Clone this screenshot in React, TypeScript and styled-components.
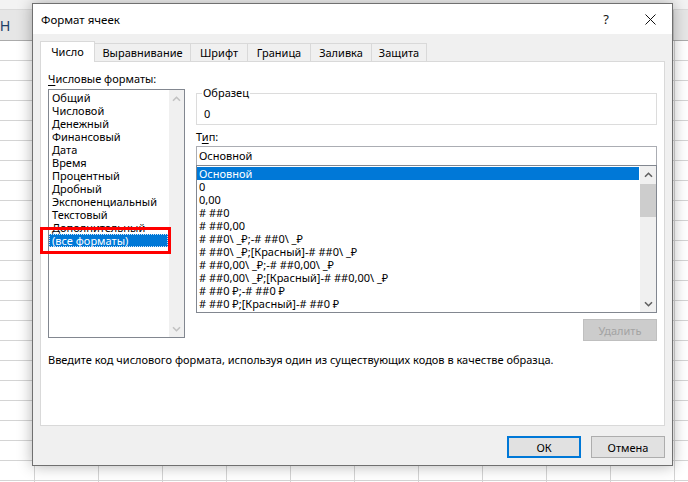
import React from "react";
import styled, { createGlobalStyle, css } from "styled-components";

const GlobalStyle = createGlobalStyle`
  html, body {
    margin: 0;
    padding: 0;
    background: #fff;
  }
  body {
    font-family: "Noto Sans", "Open Sans", sans-serif;
    font-size: 11px;
    color: #000;
  }
`;

// spreadsheet behind the dialog
const Sheet = styled.div`
  position: relative;
  width: 688px;
  height: 482px;
  overflow: hidden;
  background: #fff;
  display: flex;
  flex-direction: column;
`;

const FormulaStrip = styled.div`
  height: 10px;
  background: #f3f3f3;
  border-bottom: 1px solid #dadada;
  box-sizing: border-box;
`;

const ColumnHeader = styled.div`
  height: 31px;
  box-sizing: border-box;
  background: #e6e6e6;
  border-bottom: 1px solid #ababab;
  display: flex;
`;

const HeaderCell = styled.div<{ $w: number; $active?: boolean }>`
  flex: 0 0 ${({ $w }) => $w}px;
  box-sizing: border-box;
  border-right: 1px solid #c8c8c8;
  display: flex;
  align-items: center;
  padding-top: 2px;
  font-family: "Liberation Sans", Arial, sans-serif;
  font-size: 14px;
  color: ${({ $active }) => ($active ? "#1e3f66" : "#444")};
`;

const Cells = styled.div`
  flex: 1;
  background-image: linear-gradient(to right, #d4d4d4 1px, transparent 1px),
    linear-gradient(to bottom, transparent 19px, #d4d4d4 19px);
  background-size: 64px 100%, 100% 20px;
  background-position: 34px 0, 0 0;
`;

// dialog window
const Dialog = styled.div`
  position: absolute;
  left: 32px;
  top: 3px;
  width: 641px;
  height: 463px;
  box-sizing: border-box;
  border: 1px solid #707070;
  background: #f0f0f0;
  box-shadow: 0 0 14px rgba(0, 0, 0, 0.3);
  display: flex;
  flex-direction: column;
`;

const TitleBar = styled.div`
  height: 30px;
  flex: 0 0 30px;
  background: #fff;
  display: flex;
  align-items: center;
  padding-left: 8px;
`;

const Title = styled.div`
  flex: 1;
  font-size: 11.5px;
`;

const TitleButton = styled.div`
  width: 44px;
  height: 30px;
  display: flex;
  align-items: center;
  justify-content: center;
  font-size: 13px;
  color: #111;
`;

const Body = styled.div`
  flex: 1;
  display: flex;
  flex-direction: column;
  padding: 7px 7px 0 7px;
`;

const TabRow = styled.div`
  height: 20px;
  display: flex;
  align-items: flex-end;
`;

const Tab = styled.div<{ $w: number; $active?: boolean }>`
  width: ${({ $w }) => $w}px;
  box-sizing: border-box;
  border: 1px solid #d9d9d9;
  border-bottom: none;
  margin-right: -1px;
  display: flex;
  align-items: center;
  justify-content: center;
  ${({ $active }) =>
    $active
      ? css`
          height: 21px;
          margin-bottom: -1px;
          background: #fff;
          position: relative;
          z-index: 1;
          padding-bottom: 1px;
        `
      : css`
          height: 18px;
          background: #f0f0f0;
        `}
`;

const Panel = styled.div`
  height: 365px;
  box-sizing: border-box;
  background: #fff;
  border: 1px solid #d9d9d9;
  padding: 7px 7px 0 7px;
  display: flex;
  flex-direction: column;
`;

const Columns = styled.div`
  display: flex;
  gap: 11px;
`;

const LeftColumn = styled.div`
  width: 137px;
  display: flex;
  flex-direction: column;
`;

const RightColumn = styled.div`
  width: 461px;
  display: flex;
  flex-direction: column;
`;

const FieldLabel = styled.div<{ $h: number; $top?: number }>`
  line-height: ${({ $h }) => $h}px;
  height: ${({ $h }) => $h}px;
  margin-top: ${({ $top }) => $top ?? 0}px;
  white-space: nowrap;

  u {
    text-decoration: underline;
    text-underline-offset: 2px;
  }
`;

const ListBox = styled.div<{ $h: number }>`
  position: relative;
  height: ${({ $h }) => $h}px;
  box-sizing: border-box;
  border: 1px solid #828790;
  background: #fff;
  display: flex;
`;

const Items = styled.div<{ $pad: number }>`
  flex: 1;
  padding: 1px 1px 0 0;
  overflow: hidden;

  > div {
    padding-left: ${({ $pad }) => $pad}px;
  }
`;

const Item = styled.div<{ $selected?: boolean; $focus?: boolean }>`
  height: 13px;
  line-height: 13px;
  white-space: nowrap;
  box-sizing: border-box;
  ${({ $selected }) =>
    $selected &&
    css`
      background: #0078d7;
      color: #fff;
    `}
  ${({ $focus }) =>
    $focus &&
    css`
      outline: 1px dotted #cfe3f6;
      outline-offset: -1px;
    `}
`;

const ScrollBar = styled.div<{ $w: number }>`
  flex: 0 0 ${({ $w }) => $w}px;
  background: #f0f0f0;
  display: flex;
  flex-direction: column;
`;

const ScrollArrow = styled.div<{ $disabled?: boolean }>`
  height: 17px;
  display: flex;
  align-items: center;
  justify-content: center;
  color: ${({ $disabled }) => ($disabled ? "#c2c2c2" : "#606060")};
`;

const ScrollTrack = styled.div`
  flex: 1;
  padding-top: 1px;
`;

const Thumb = styled.div`
  height: 33px;
  background: #cdcdcd;
`;

const Highlight = styled.div`
  position: absolute;
  left: -9px;
  top: 137px;
  width: 131px;
  height: 27px;
  box-sizing: border-box;
  border: 3px solid #f00;
  pointer-events: none;
`;

const GroupBox = styled.div`
  margin-top: 24px;
  border: 1px solid #dcdcdc;
  padding-bottom: 2px;
`;

const GroupLegend = styled.div`
  margin: -9px 0 0 5px;
  padding: 0 1px;
  width: fit-content;
  background: #fff;
  line-height: 16px;
`;

const GroupValue = styled.div`
  margin-top: 5px;
  padding-left: 7px;
  line-height: 16px;
`;

const TypeInput = styled.div`
  margin-top: 1px;
  height: 19px;
  box-sizing: border-box;
  border: 1px solid #abadb3;
  border-bottom: none;
  padding-left: 2px;
  line-height: 18px;
`;

const Button = styled.div<{ $variant?: "default" | "disabled" | "normal" }>`
  width: 74px;
  height: 22px;
  box-sizing: border-box;
  display: flex;
  align-items: center;
  justify-content: center;
  background: #e1e1e1;
  border: 1px solid #adadad;
  ${({ $variant }) =>
    $variant === "default" &&
    css`
      border: 2px solid #0078d7;
    `}
  ${({ $variant }) =>
    $variant === "disabled" &&
    css`
      background: #cccccc;
      border-color: #bfbfbf;
      color: #a3a3a3;
    `}
`;

const DeleteRow = styled.div`
  margin-top: 6px;
  display: flex;
  justify-content: flex-end;
`;

const Hint = styled.div`
  margin-top: 11px;
  line-height: 16px;
  white-space: nowrap;
`;

const Footer = styled.div`
  margin-top: 10px;
  display: flex;
  justify-content: flex-end;
  gap: 10px;
`;

const Chevron = ({ down }: { down?: boolean }) => (
  <svg width="9" height="6" viewBox="0 0 9 6">
    <path
      d={down ? "M1 1.2 L4.5 4.7 L8 1.2" : "M1 4.8 L4.5 1.3 L8 4.8"}
      fill="none"
      stroke="currentColor"
      strokeWidth="1.6"
    />
  </svg>
);

const CloseIcon = () => (
  <svg width="11" height="11" viewBox="0 0 11 11">
    <path d="M0.5 0.5 L10.5 10.5 M10.5 0.5 L0.5 10.5" stroke="#111" strokeWidth="1" />
  </svg>
);

const categories = [
  "Общий",
  "Числовой",
  "Денежный",
  "Финансовый",
  "Дата",
  "Время",
  "Процентный",
  "Дробный",
  "Экспоненциальный",
  "Текстовый",
  "Дополнительный",
  "(все форматы)",
];

const formats = [
  "Основной",
  "0",
  "0,00",
  "# ##0",
  "# ##0,00",
  "# ##0\\ _₽;-# ##0\\ _₽",
  "# ##0\\ _₽;[Красный]-# ##0\\ _₽",
  "# ##0,00\\ _₽;-# ##0,00\\ _₽",
  "# ##0,00\\ _₽;[Красный]-# ##0,00\\ _₽",
  "# ##0 ₽;-# ##0 ₽",
  "# ##0 ₽;[Красный]-# ##0 ₽",
];

const tabs = [
  { label: "Число", w: 55 },
  { label: "Выравнивание", w: 97 },
  { label: "Шрифт", w: 58 },
  { label: "Граница", w: 64 },
  { label: "Заливка", w: 62 },
  { label: "Защита", w: 56 },
];

export default function App() {
  return (
    <>
      <GlobalStyle />
      <Sheet>
        <FormulaStrip />
        <ColumnHeader>
          <HeaderCell $w={34} $active>
            H
          </HeaderCell>
          {Array.from({ length: 11 }).map((_, i) => (
            <HeaderCell key={i} $w={64} />
          ))}
        </ColumnHeader>
        <Cells />

        <Dialog>
          <TitleBar>
            <Title>Формат ячеек</Title>
            <TitleButton>?</TitleButton>
            <TitleButton>
              <CloseIcon />
            </TitleButton>
          </TitleBar>
          <Body>
            <TabRow>
              {tabs.map((t, i) => (
                <Tab key={t.label} $w={t.w} $active={i === 0}>
                  {t.label}
                </Tab>
              ))}
            </TabRow>
            <Panel>
              <Columns>
                <LeftColumn>
                  <FieldLabel $h={20}>
                    <u>Ч</u>исловые форматы:
                  </FieldLabel>
                  <ListBox $h={249}>
                    <Items $pad={3}>
                      {categories.map((c, i) => (
                        <Item key={c} $selected={i === 11} $focus={i === 11}>
                          {c}
                        </Item>
                      ))}
                    </Items>
                    <ScrollBar $w={15}>
                      <ScrollArrow $disabled>
                        <Chevron />
                      </ScrollArrow>
                      <ScrollTrack />
                      <ScrollArrow $disabled>
                        <Chevron down />
                      </ScrollArrow>
                    </ScrollBar>
                    <Highlight />
                  </ListBox>
                </LeftColumn>

                <RightColumn>
                  <GroupBox>
                    <GroupLegend>Образец</GroupLegend>
                    <GroupValue>0</GroupValue>
                  </GroupBox>
                  <FieldLabel $h={16} $top={4}>
                    Т<u>и</u>п:
                  </FieldLabel>
                  <TypeInput>Основной</TypeInput>
                  <ListBox $h={148}>
                    <Items $pad={2}>
                      {formats.map((f, i) => (
                        <Item key={f} $selected={i === 0}>
                          {f}
                        </Item>
                      ))}
                    </Items>
                    <ScrollBar $w={16}>
                      <ScrollArrow>
                        <Chevron />
                      </ScrollArrow>
                      <ScrollTrack>
                        <Thumb />
                      </ScrollTrack>
                      <ScrollArrow>
                        <Chevron down />
                      </ScrollArrow>
                    </ScrollBar>
                  </ListBox>
                  <DeleteRow>
                    <Button $variant="disabled">Удалить</Button>
                  </DeleteRow>
                </RightColumn>
              </Columns>
              <Hint>
                Введите код числового формата, используя один из существующих кодов в качестве образца.
              </Hint>
            </Panel>
            <Footer>
              <Button $variant="default">ОК</Button>
              <Button>Отмена</Button>
            </Footer>
          </Body>
        </Dialog>
      </Sheet>
    </>
  );
}
